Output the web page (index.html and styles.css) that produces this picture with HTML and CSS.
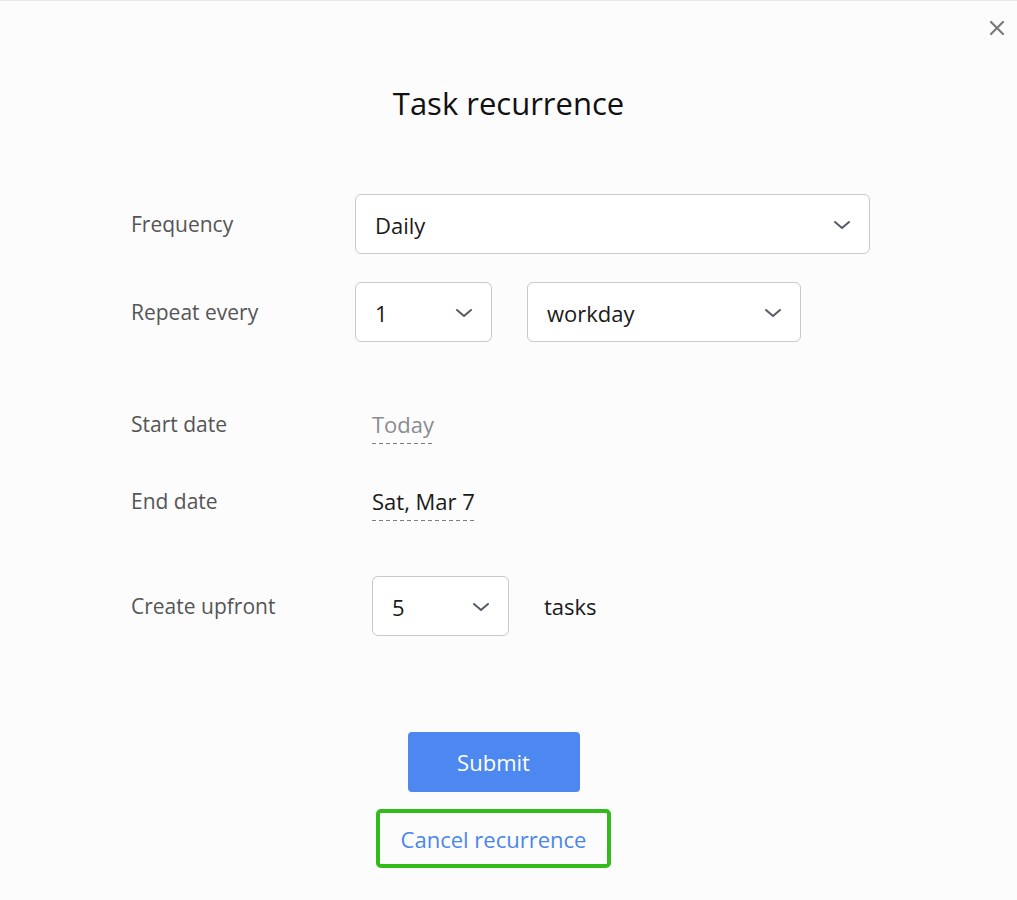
FILE: index.html
```html
<!doctype html>
<html lang="en-us">
<head>
    <title>Task recurrence</title>
    <link rel="stylesheet" href="styles.css">
</head>
<body>
    <div id="dialog">
        <button class="close-btn" aria-label="Close">
            <svg width="16" height="16" viewBox="0 0 16 16"><path d="M2 2 L14 14 M14 2 L2 14" stroke="#7a7a7a" stroke-width="2.2" stroke-linecap="round" fill="none"/></svg>
        </button>

        <h1 class="title">Task recurrence</h1>

        <div class="form">
            <div class="row row-select">
                <div class="label">Frequency</div>
                <div class="select select-wide">
                    <span>Daily</span>
                    <svg class="chevron" width="18" height="10" viewBox="0 0 18 10"><path d="M2 2 L9 8 L16 2" stroke="#545b68" stroke-width="2" fill="none" stroke-linecap="round" stroke-linejoin="round"/></svg>
                </div>
            </div>

            <div class="row row-select row-repeat">
                <div class="label">Repeat every</div>
                <div class="select select-small">
                    <span>1</span>
                    <svg class="chevron" width="18" height="10" viewBox="0 0 18 10"><path d="M2 2 L9 8 L16 2" stroke="#545b68" stroke-width="2" fill="none" stroke-linecap="round" stroke-linejoin="round"/></svg>
                </div>
                <div class="select select-mid">
                    <span>workday</span>
                    <svg class="chevron" width="18" height="10" viewBox="0 0 18 10"><path d="M2 2 L9 8 L16 2" stroke="#545b68" stroke-width="2" fill="none" stroke-linecap="round" stroke-linejoin="round"/></svg>
                </div>
            </div>

            <div class="row row-date row-start">
                <div class="label">Start date</div>
                <div class="value"><span class="date muted">Today</span></div>
            </div>

            <div class="row row-date row-end">
                <div class="label">End date</div>
                <div class="value"><span class="date">Sat, Mar 7</span></div>
            </div>

            <div class="row row-select row-upfront">
                <div class="label">Create upfront</div>
                <div class="value">
                    <div class="select select-small">
                        <span>5</span>
                        <svg class="chevron" width="18" height="10" viewBox="0 0 18 10"><path d="M2 2 L9 8 L16 2" stroke="#545b68" stroke-width="2" fill="none" stroke-linecap="round" stroke-linejoin="round"/></svg>
                    </div>
                    <span class="unit">tasks</span>
                </div>
            </div>
        </div>

        <div class="actions">
            <button class="submit">Submit</button>
            <a class="cancel-link" href="#">Cancel recurrence</a>
        </div>
    </div>
</body>
</html>
```

FILE: styles.css
```css
/* General styles */
body {
    font-family: "Open Sans", "Noto Sans", sans-serif;
    margin: 0;
    padding: 0;
    background-color: #fcfcfc;
    border-top: 1px solid #e9e9e9;
    color: #222;
}

#dialog {
    position: relative;
    width: 1017px;
    height: 899px;
}

.close-btn {
    position: absolute;
    top: 19px;
    right: 12px;
    background: none;
    border: none;
    padding: 0;
    width: 16px;
    height: 16px;
    cursor: pointer;
}

.title {
    margin: 0;
    padding-top: 82px;
    font-size: 31px;
    font-weight: 400;
    line-height: 40px;
    text-align: center;
    color: #111;
}

.form {
    margin-top: 71px;
    padding-left: 131px;
}

.row {
    display: flex;
    align-items: center;
}

.label {
    width: 224px;
    flex-shrink: 0;
    font-size: 21px;
    color: #555;
}

.row-select {
    height: 60px;
}

.row-repeat {
    margin-top: 28px;
}

.row-date {
    height: 40px;
}

.row-start {
    margin-top: 62px;
}

.row-end {
    margin-top: 37px;
}

.row-upfront {
    margin-top: 55px;
}

.select {
    box-sizing: border-box;
    height: 60px;
    display: flex;
    align-items: center;
    justify-content: space-between;
    padding: 2px 18px 0 19px;
    background-color: #fff;
    border: 1px solid #c9c9c9;
    border-radius: 6px;
    font-size: 22px;
    color: #1a1a1a;
}

.select-wide {
    width: 515px;
}

.select-small {
    width: 137px;
}

.select-mid {
    width: 274px;
    margin-left: 35px;
}

.chevron {
    display: block;
}

.value {
    display: flex;
    align-items: center;
    padding-left: 17px;
}

.date {
    display: inline-block;
    font-size: 22px;
    line-height: 30px;
    padding-top: 4px;
    padding-bottom: 5px;
    background: repeating-linear-gradient(to right, #7d7d7d 0 4px, transparent 4px 7px) left bottom / 100% 1px no-repeat;
    color: #1a1a1a;
}

.date.muted {
    color: #8a8c90;
}

.unit {
    margin-left: 35px;
    font-size: 22px;
    color: #1a1a1a;
}

.actions {
    margin-top: 96px;
    margin-right: 30px;
    display: flex;
    flex-direction: column;
    align-items: center;
}

.submit {
    width: 172px;
    height: 60px;
    background-color: #4d88f0;
    color: #fff;
    border: none;
    border-radius: 4px;
    font-family: inherit;
    font-size: 22px;
    cursor: pointer;
}

.cancel-link {
    box-sizing: border-box;
    margin-top: 17px;
    width: 235px;
    height: 59px;
    display: flex;
    align-items: center;
    justify-content: center;
    border: 4px solid #33bb1c;
    border-radius: 5px;
    font-size: 22px;
    color: #4a86ee;
    text-decoration: none;
}
```
